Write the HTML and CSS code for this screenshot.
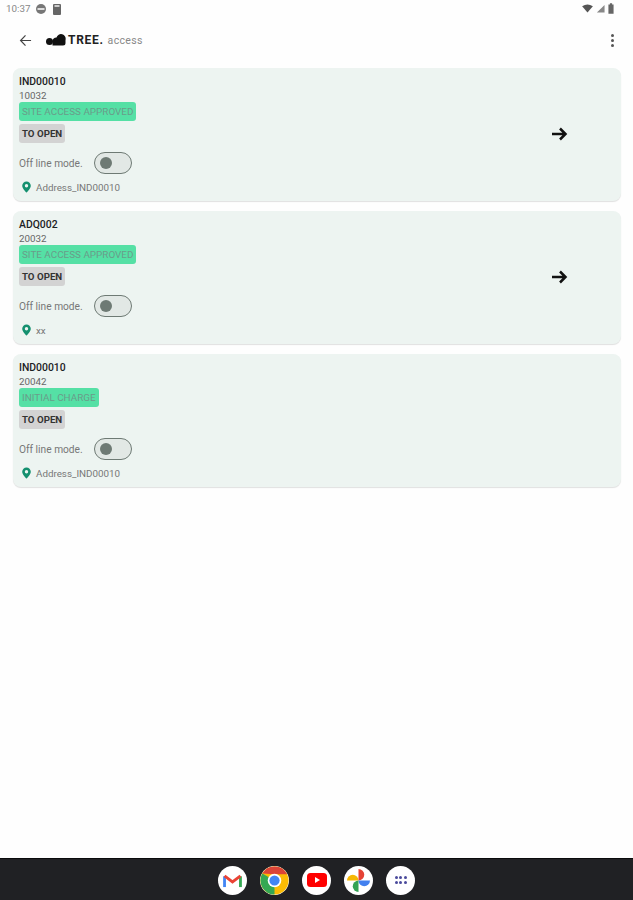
FILE: index.html
```html
<!doctype html>
<html lang="en">
  <head>
    <meta charset="UTF-8" />
    <meta name="viewport" content="width=device-width, initial-scale=1.0" />
    <title>TREE. access</title>
    <link rel="stylesheet" href="styles.css">
  </head>
  <body>
    <div class="status-bar">
      <div class="status-left">
        <span class="clock">10:37</span>
        <svg class="status-icon" viewBox="0 0 12 12" width="12" height="12"><circle cx="6" cy="6" r="5" fill="#777"/><rect x="2.500" y="5" width="7" height="2" fill="#ddd"/></svg>
        <svg class="status-icon" viewBox="0 0 10 12" width="10" height="12"><path d="M2 1h6a1 1 0 0 1 1 1v9a1 1 0 0 1-1 1H2a1 1 0 0 1-1-1V2a1 1 0 0 1 1-1z" fill="#666"/><rect x="2.500" y="2" width="5" height="2" fill="#ccc"/></svg>
      </div>
      <div class="status-right">
        <svg viewBox="0 0 12 10" width="11" height="9"><path d="M0 2.500Q6-1.500 12 2.500L6 9.500z" fill="#555"/></svg>
        <svg viewBox="0 0 10 10" width="9" height="9"><path d="M9.500 1v8.500H1z" fill="#888"/></svg>
        <svg viewBox="0 0 7 12" width="6" height="11"><path d="M2.200 0h2.600v1.200H6.500V12H.5V1.200h1.700z" fill="#666"/></svg>
      </div>
    </div>

    <header class="app-bar">
      <svg class="back" viewBox="0 0 14 14" width="13" height="13"><path d="M13 7H2M7 1.500 1.700 7 7 12.500" fill="none" stroke="#444" stroke-width="1.300"/></svg>
      <svg class="logo" viewBox="0 0 20 12" width="20" height="12"><circle cx="3.500" cy="7.500" r="3.500" fill="#111"/><path d="M6.500 11.500V7a4 4 0 0 1 4-3.500 4.500 4.500 0 0 1 9 2.500v3a2.500 2.500 0 0 1-2.500 2.500z" fill="#111"/></svg>
      <span class="brand">TREE.</span>
      <span class="brand-sub">access</span>
      <div class="menu"><i></i><i></i><i></i></div>
    </header>

    <main class="list">
      <section class="card">
        <div class="card-info">
          <div class="code">IND00010</div>
          <div class="number">10032</div>
          <span class="state">SITE ACCESS APPROVED</span>
          <span class="open-btn">TO OPEN</span>
          <div class="offline">
            <span>Off line mode.</span>
            <span class="switch"><i></i></span>
          </div>
          <div class="address">
            <svg viewBox="0 0 12 14" width="11" height="12"><path fill-rule="evenodd" d="M6 .5a5 5 0 0 1 5 5C11 9 6 13.500 6 13.500S1 9 1 5.500a5 5 0 0 1 5-5zM6 3.500a2 2 0 1 0 0 4 2 2 0 0 0 0-4z" fill="#14906f"/></svg>
            <span>Address_IND00010</span>
          </div>
        </div>
        <svg class="arrow" viewBox="0 0 16 14" width="16" height="14"><path d="M0 7h13M8 1.500 13.500 7 8 12.500" fill="none" stroke="#111" stroke-width="2.500"/></svg>
      </section>

      <section class="card">
        <div class="card-info">
          <div class="code">ADQ002</div>
          <div class="number">20032</div>
          <span class="state">SITE ACCESS APPROVED</span>
          <span class="open-btn">TO OPEN</span>
          <div class="offline">
            <span>Off line mode.</span>
            <span class="switch"><i></i></span>
          </div>
          <div class="address">
            <svg viewBox="0 0 12 14" width="11" height="12"><path fill-rule="evenodd" d="M6 .5a5 5 0 0 1 5 5C11 9 6 13.500 6 13.500S1 9 1 5.500a5 5 0 0 1 5-5zM6 3.500a2 2 0 1 0 0 4 2 2 0 0 0 0-4z" fill="#14906f"/></svg>
            <span>xx</span>
          </div>
        </div>
        <svg class="arrow" viewBox="0 0 16 14" width="16" height="14"><path d="M0 7h13M8 1.500 13.500 7 8 12.500" fill="none" stroke="#111" stroke-width="2.500"/></svg>
      </section>

      <section class="card">
        <div class="card-info">
          <div class="code">IND00010</div>
          <div class="number">20042</div>
          <span class="state">INITIAL CHARGE</span>
          <span class="open-btn">TO OPEN</span>
          <div class="offline">
            <span>Off line mode.</span>
            <span class="switch"><i></i></span>
          </div>
          <div class="address">
            <svg viewBox="0 0 12 14" width="11" height="12"><path fill-rule="evenodd" d="M6 .5a5 5 0 0 1 5 5C11 9 6 13.500 6 13.500S1 9 1 5.500a5 5 0 0 1 5-5zM6 3.500a2 2 0 1 0 0 4 2 2 0 0 0 0-4z" fill="#14906f"/></svg>
            <span>Address_IND00010</span>
          </div>
        </div>
      </section>
    </main>

    <footer class="dock">
      <span class="dock-app">
        <svg viewBox="0 0 20 16" width="19" height="15"><path d="M1.500 15V3.500" stroke="#4285f4" stroke-width="3" fill="none"/><path d="M18.500 15V3.500" stroke="#34a853" stroke-width="3" fill="none"/><path d="M1.500 3 10 9.500 18.500 3" stroke="#ea4335" stroke-width="3" fill="none"/></svg>
      </span>
      <span class="dock-app">
        <svg viewBox="0 0 30 30" width="29" height="29"><circle cx="15" cy="15" r="14.500" fill="#fbbc05"/><path d="M15 15 2.400 7.800A14.500 14.500 0 0 0 15 29.500z" fill="#34a853"/><path d="M2.400 7.800A14.500 14.500 0 0 1 28 8.500H15z" fill="#db4437"/><circle cx="15" cy="15" r="7" fill="#fff"/><circle cx="15" cy="15" r="5.300" fill="#4285f4"/></svg>
      </span>
      <span class="dock-app">
        <svg viewBox="0 0 20 14" width="20" height="14"><rect width="20" height="14" rx="3.500" fill="#f00"/><path d="M8 4v6l5-3z" fill="#fff"/></svg>
      </span>
      <span class="dock-app">
        <svg viewBox="0 0 22 22" width="23" height="23"><path d="M11 11H0a5.500 5.500 0 0 1 11 0z" fill="#f6b704"/><path d="M11 11V0a5.500 5.500 0 0 1 0 11z" fill="#e54335"/><path d="M11 11h11a5.500 5.500 0 0 1-11 0z" fill="#4280ef"/><path d="M11 11v11a5.500 5.500 0 0 1 0-11z" fill="#34a353"/></svg>
      </span>
      <span class="dock-app">
        <span class="dots"><i></i><i></i><i></i><i></i><i></i><i></i></span>
      </span>
    </footer>
  </body>
</html>
```

FILE: styles.css
```css
body {
  margin: 0;
  height: 900px;
  display: flex;
  flex-direction: column;
  background-color: #fefefe;
  font-family: "Roboto", sans-serif;
  color: #222;
  overflow: hidden;
}

.status-bar {
  height: 17px;
  padding: 0 19px 0 6px;
  display: flex;
  justify-content: space-between;
  align-items: center;
}

.status-left,
.status-right {
  display: flex;
  align-items: center;
  gap: 5px;
}

.status-right {
  gap: 3px;
}

.clock {
  font-size: 9.800px;
  color: #888;
}

.app-bar {
  height: 46px;
  padding: 0 19px 0 19px;
  display: flex;
  align-items: center;
}

.back {
  margin-right: 14px;
}

.logo {
  margin-right: 2px;
}

.brand {
  font-size: 12px;
  font-weight: 700;
  letter-spacing: 0.7px;
  color: #222;
}

.brand-sub {
  margin-left: 4px;
  font-size: 10.500px;
  color: #888;
  letter-spacing: 0.35px;
}

.menu {
  margin-left: auto;
  display: flex;
  flex-direction: column;
  gap: 2px;
}

.menu i {
  width: 3px;
  height: 3px;
  border-radius: 50%;
  background-color: #555;
}

.list {
  flex: 1;
  padding: 5px 12px 0 13px;
  display: flex;
  flex-direction: column;
  gap: 10px;
}

.card {
  height: 133px;
  box-sizing: border-box;
  padding: 6px;
  display: flex;
  align-items: center;
  background-color: #edf4f1;
  border-radius: 8px;
  box-shadow: 0 1px 1px rgba(0, 0, 0, 0.12);
}

.card-info {
  flex: 1;
  align-self: flex-start;
  display: flex;
  flex-direction: column;
  align-items: flex-start;
}

.code {
  margin-top: 1px;
  font-size: 10.400px;
  line-height: 14px;
  font-weight: 500;
  color: #1c2224;
}

.number {
  font-size: 9.800px;
  line-height: 13px;
  color: #666;
}

.state {
  padding: 0 3px;
  height: 19px;
  line-height: 19px;
  font-size: 9.900px;
  color: #6a9c8a;
  background-color: #55e0a5;
  border-radius: 3px;
}

.open-btn {
  margin-top: 3px;
  padding: 0 3px;
  height: 19px;
  line-height: 19px;
  font-size: 9.700px;
  font-weight: 700;
  color: #333;
  background-color: #d3d3d3;
  border-radius: 3px;
}

.offline {
  margin-top: 9px;
  display: flex;
  align-items: center;
  gap: 11px;
  font-size: 10.200px;
  color: #777;
}

.switch {
  width: 38px;
  height: 22px;
  box-sizing: border-box;
  display: flex;
  align-items: center;
  padding-left: 5px;
  border: 1.500px solid #6e7a74;
  border-radius: 11px;
  background-color: #e2e8e5;
}

.switch i {
  width: 12px;
  height: 12px;
  border-radius: 50%;
  background-color: #6e7a74;
}

.address {
  margin-top: 7px;
  padding-left: 2px;
  display: flex;
  align-items: center;
  gap: 4px;
  font-size: 9.800px;
  color: #777;
}

.arrow {
  margin-right: 47px;
  margin-bottom: 1px;
}

.dock {
  height: 40px;
  padding-top: 1px;
  display: flex;
  justify-content: center;
  align-items: center;
  gap: 13px;
  background-color: #202124;
  border-top: 1px solid #0b0b0c;
}

.dock-app {
  width: 29px;
  height: 29px;
  display: flex;
  justify-content: center;
  align-items: center;
  background-color: #fff;
  border-radius: 50%;
}

.dots {
  display: grid;
  grid-template-columns: repeat(3, 3px);
  gap: 2px 1.500px;
}

.dots i {
  width: 3px;
  height: 3px;
  border-radius: 50%;
  background-color: #4a4a9c;
}
```
